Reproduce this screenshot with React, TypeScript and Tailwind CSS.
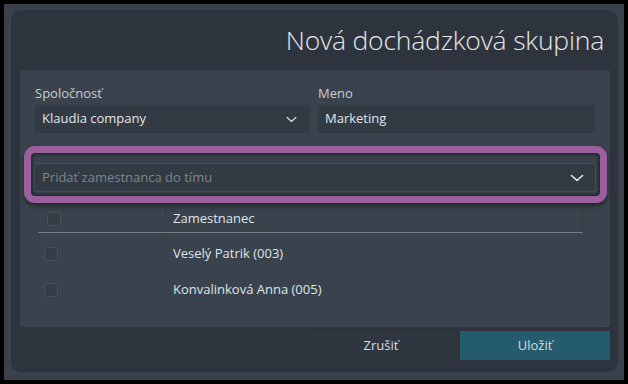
import React from 'react';

const Chevron = ({ className }: { className: string }) => (
  <svg viewBox="0 0 14 8" className={className} fill="none" stroke="currentColor" strokeWidth="1.6" strokeLinecap="round" strokeLinejoin="round">
    <path d="M1.5 1.5 7 6.5l5.5-5" />
  </svg>
);

const Checkbox = () => (
  <div className="w-[14px] h-[14px] rounded-[3px] bg-[#353d46] border border-[#46505a]" />
);

const rows = ['Veselý Patrik (003)', 'Konvalinková Anna (005)'];

const App = () => {
  return (
    <div className="w-[628px] h-[384px] bg-black p-[4px] font-['Open_Sans','Noto_Sans',sans-serif]">
      <div className="h-[376px] bg-[#3b414b] pt-[6px] pl-[7px] pr-[6px] pb-[8px]">
        <div className="h-full rounded-[10px] bg-[#2d343d] flex flex-col pl-[9px] pr-[8px]">
          <div className="h-[60px] flex items-center justify-end pr-[6px] pt-[2px]">
            <h1 className="text-[26.5px] font-light text-[#e4e6e8] tracking-[-0.2px]">Nová dochádzková skupina</h1>
          </div>

          <div className="h-[257px] bg-[#3a434d] rounded-[3px] px-[15px] pt-[13px]">
            <div className="flex gap-[8px]">
              <div className="w-[275px]">
                <div className="text-[13px] leading-[20px] text-[#c9ccd0] mb-[2px]">Spoločnosť</div>
                <div className="h-[28px] bg-[#323a43] rounded-[2px] flex items-center justify-between pl-[7px] pr-[13px]">
                  <span className="text-[13px] text-[#e2e6ea]">Klaudia company</span>
                  <Chevron className="w-[11px] h-[7px] text-[#d6dade]" />
                </div>
              </div>
              <div className="flex-1">
                <div className="text-[13px] leading-[20px] text-[#c9ccd0] mb-[2px]">Meno</div>
                <div className="h-[28px] bg-[#323a43] rounded-[2px] flex items-center pl-[7px]">
                  <span className="text-[13px] text-[#e2e6ea]">Marketing</span>
                </div>
              </div>
            </div>

            <div className="relative mt-[30px] -ml-[1px] mr-[-1px]">
              <div className="h-[29px] bg-[#323a43] border border-[#46505a] rounded-[2px] flex items-center justify-between pl-[7px] pr-[11px]">
                <span className="text-[13px] text-[#7d858e]">Pridať zamestnanca do tímu</span>
                <Chevron className="w-[14px] h-[8px] text-[#e8eaec]" />
              </div>
              <div className="absolute -left-[10px] -right-[11px] -top-[17px] -bottom-[11px] rounded-[11px] border-[7px] border-[#9a5f9c] shadow-[0_3px_5px_rgba(0,0,0,0.45),inset_0_0_3px_2px_rgba(20,24,30,0.6)]" />
            </div>

            <div className="mt-[13px] ml-[3px] w-[545px]">
              <div className="h-[28px] flex border-b border-[#7a7d80] border-r border-r-[#333a42]">
                <div className="w-[127px] flex items-center pl-[9px]">
                  <Checkbox />
                </div>
                <div className="flex-1 flex items-center pl-[7px] border-l border-[#333a42] text-[13px] text-[#dfe3e7]">Zamestnanec</div>
              </div>
              <div className="pt-[3px] flex flex-col">
                {rows.map((r) => (
                  <div key={r} className="h-[36px] flex">
                    <div className="w-[127px] flex items-center pl-[6px]">
                      <Checkbox />
                    </div>
                    <div className="flex-1 flex items-center pl-[7px] border-l border-[#333a42] text-[13px] text-[#dfe3e7]">{r}</div>
                  </div>
                ))}
              </div>
            </div>
          </div>

          <div className="flex justify-end gap-[4px] mt-[4px]">
            <button className="w-[150px] h-[29px] bg-[#2f363f] text-[13px] text-[#d6dce2]">Zrušiť</button>
            <button className="w-[150px] h-[29px] bg-[#245c6d] text-[13px] text-[#d6dce2]">Uložiť</button>
          </div>
        </div>
      </div>
    </div>
  );
};

export default App;
